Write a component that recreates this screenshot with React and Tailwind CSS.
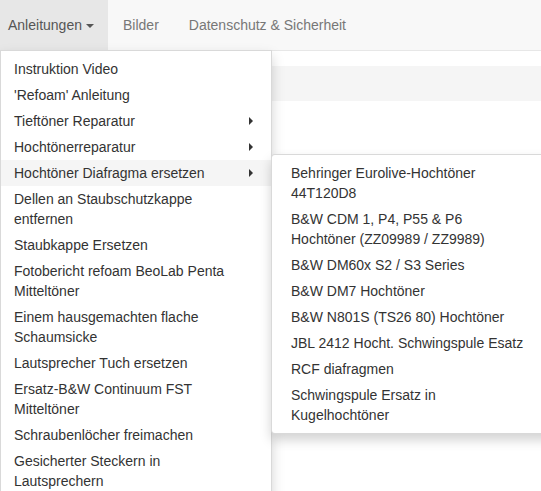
import React from 'react';

const mainItems = [
  { lines: ['Instruktion Video'] },
  { lines: ["'Refoam' Anleitung"] },
  { lines: ['Tieftöner Reparatur'], sub: true },
  { lines: ['Hochtönerreparatur'], sub: true },
  { lines: ['Hochtöner Diafragma ersetzen'], sub: true, active: true },
  { lines: ['Dellen an Staubschutzkappe', 'entfernen'] },
  { lines: ['Staubkappe Ersetzen'] },
  { lines: ['Fotobericht refoam BeoLab Penta', 'Mitteltöner'] },
  { lines: ['Einem hausgemachten flache', 'Schaumsicke'] },
  { lines: ['Lautsprecher Tuch ersetzen'] },
  { lines: ['Ersatz-B&W Continuum FST', 'Mitteltöner'] },
  { lines: ['Schraubenlöcher freimachen'] },
  { lines: ['Gesicherter Steckern in', 'Lautsprechern'] },
];

const subItems = [
  ['Behringer Eurolive-Hochtöner', '44T120D8'],
  ['B&W CDM 1, P4, P55 & P6', 'Hochtöner (ZZ09989 / ZZ9989)'],
  ['B&W DM60x S2 / S3 Series'],
  ['B&W DM7 Hochtöner'],
  ['B&W N801S (TS26 80) Hochtöner'],
  ['JBL 2412 Hocht. Schwingspule Esatz'],
  ['RCF diafragmen'],
  ['Schwingspule Ersatz in', 'Kugelhochtöner'],
];

const Lines = ({ lines }) =>
  lines.map((l, i) => (
    <React.Fragment key={i}>
      {i > 0 && <br />}
      {l}
    </React.Fragment>
  ));

const CaretRight = () => (
  <span className="absolute right-[18px] top-[9px] w-0 h-0 border-y-[4px] border-y-transparent border-l-[4px] border-l-[#333]" />
);

const App = () => {
  return (
    <div
      className="relative h-[491px] overflow-hidden bg-white text-[14px] leading-[20px]"
      style={{ fontFamily: '"Liberation Sans", Arial, sans-serif' }}
    >
      {/* Navbar */}
      <nav className="flex h-[51px] bg-[#f8f8f8] border-b border-[#e7e7e7]">
        <a className="flex items-center h-[50px] w-[108px] pl-[8px] bg-[#e7e7e7] text-[#555]">
          Anleitungen
          <span className="ml-[4px] mt-[1px] w-0 h-0 border-x-[4px] border-x-transparent border-t-[4px] border-t-[#555]" />
        </a>
        <a className="flex items-center h-[50px] px-[15px] text-[#777]">Bilder</a>
        <a className="flex items-center h-[50px] px-[15px] text-[#777]">Datenschutz &amp; Sicherheit</a>
      </nav>

      {/* Page content behind the menu */}
      <div className="mt-[15px] h-[35px] bg-[#f5f5f5]" />

      {/* Dropdown */}
      <ul className="absolute left-0 top-[50px] w-[272px] py-[5px] bg-white border border-[rgba(0,0,0,0.15)] shadow-[0_6px_12px_rgba(0,0,0,0.175)] text-[#333]">
        {mainItems.map((item, i) => (
          <li
            key={i}
            className={`relative pl-[13px] pr-[14px] py-[3px] ${item.active ? 'bg-[#f5f5f5]' : ''}`}
          >
            <Lines lines={item.lines} />
            {item.sub && <CaretRight />}
          </li>
        ))}
      </ul>

      {/* Submenu */}
      <ul className="absolute left-[271px] top-[154px] w-[300px] py-[5px] bg-white border border-[rgba(0,0,0,0.15)] rounded-[4px] shadow-[0_6px_12px_rgba(0,0,0,0.175)] text-[#333]">
        {subItems.map((lines, i) => (
          <li key={i} className="px-[19px] py-[3px] whitespace-nowrap">
            <Lines lines={lines} />
          </li>
        ))}
      </ul>
    </div>
  );
};

export default App;
